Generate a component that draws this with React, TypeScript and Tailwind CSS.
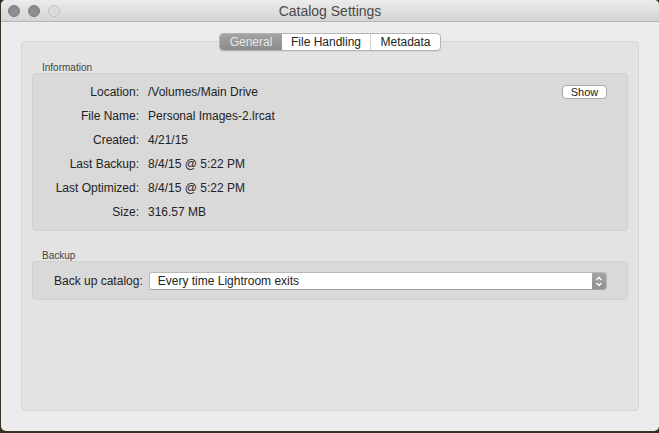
import React from "react";

const rows: { label: string; value: string }[] = [
  { label: "Location:", value: "/Volumes/Main Drive" },
  { label: "File Name:", value: "Personal Images-2.lrcat" },
  { label: "Created:", value: "4/21/15" },
  { label: "Last Backup:", value: "8/4/15 @ 5:22 PM" },
  { label: "Last Optimized:", value: "8/4/15 @ 5:22 PM" },
  { label: "Size:", value: "316.57 MB" },
];

export default function App() {
  return (
    <div className="w-[659px] h-[433px] bg-[#3a3125] pl-px font-['Liberation_Sans',Arial,sans-serif] text-[#232323]">
      <div className="h-[431px] flex flex-col bg-[#ececec] rounded-[5px] overflow-hidden">
        {/* TITLE BAR */}
        <div className="relative h-[22px] shrink-0 flex items-center justify-center bg-gradient-to-b from-[#ececec] to-[#d4d4d4] border-b border-[#b5b5b5]">
          <div className="absolute left-[7px] top-[5px] flex gap-[8px]">
            <span className="w-[12px] h-[12px] rounded-full bg-[#8d8d8d] border border-[#7c7c7c]" />
            <span className="w-[12px] h-[12px] rounded-full bg-[#8d8d8d] border border-[#7c7c7c]" />
            <span className="w-[12px] h-[12px] rounded-full bg-[#dcdcdc] border border-[#c2c2c2]" />
          </div>
          <span className="text-[14px] text-[#4b4b4b] leading-none">Catalog Settings</span>
        </div>

        {/* BODY */}
        <div className="flex-1 flex flex-col px-[20px] pt-[11px] pb-[20px]">
          {/* TABS */}
          <div className="relative z-10 flex justify-center">
            <div className="flex h-[18px] rounded-[4px] border border-[#b4b4b4] bg-white overflow-hidden text-[12px] leading-none shadow-[0_1px_0_rgba(0,0,0,0.06)]">
              <div className="w-[62px] flex items-center justify-center bg-gradient-to-b from-[#a3a3a3] to-[#8c8c8c] text-[#e6e6e6]">
                General
              </div>
              <div className="w-[89px] flex items-center justify-center border-r border-[#d4d4d4]">
                File Handling
              </div>
              <div className="w-[69px] flex items-center justify-center">Metadata</div>
            </div>
          </div>

          {/* TAB BOX */}
          <div className="-mt-[10px] flex-1 rounded-[4px] border border-[#d6d6d6] bg-[#e3e3e3] px-[10px] pt-[20px]">
            <div className="h-[11px] leading-[11px] text-[10px] text-[#444] pl-[10px]">Information</div>
            <div className="rounded-[4px] border border-[#d0d0d0] bg-[#d9d9d9] py-[6px]">
              {rows.map((r, i) => (
                <div key={r.label} className="h-[24px] flex items-center text-[12px]">
                  <span className="w-[106px] text-right">{r.label}</span>
                  <span className="ml-[9px] flex-1">{r.value}</span>
                  {i === 0 && (
                    <button className="mr-[20px] w-[45px] h-[14px] rounded-[4px] border border-[#a8a8a8] bg-white text-[11px] leading-none flex items-center justify-center">
                      Show
                    </button>
                  )}
                </div>
              ))}
            </div>

            <div className="mt-[19px] h-[11px] leading-[11px] text-[10px] text-[#444] pl-[10px]">Backup</div>
            <div className="rounded-[4px] border border-[#d0d0d0] bg-[#d9d9d9] pt-[10px] pb-[9px] pl-[21px] pr-[20px] flex items-center">
              <span className="text-[12px] mr-[6px]">Back up catalog:</span>
              <div className="flex-1 h-[18px] flex rounded-[3px] border border-[#b9b9b9] border-b-[#a3a3a3] bg-white overflow-hidden">
                <span className="flex-1 pl-[8px] text-[12px] leading-[16px]">Every time Lightroom exits</span>
                <span className="w-[14px] flex items-center justify-center bg-gradient-to-b from-[#a5a5a5] to-[#8f8f8f]">
                  <svg width="8" height="11" viewBox="0 0 8 11" fill="none" stroke="white" strokeWidth="1.3">
                    <path d="M1.5 4 L4 1.5 L6.5 4" />
                    <path d="M1.5 7 L4 9.5 L6.5 7" />
                  </svg>
                </span>
              </div>
            </div>
          </div>
        </div>
      </div>
    </div>
  );
}
